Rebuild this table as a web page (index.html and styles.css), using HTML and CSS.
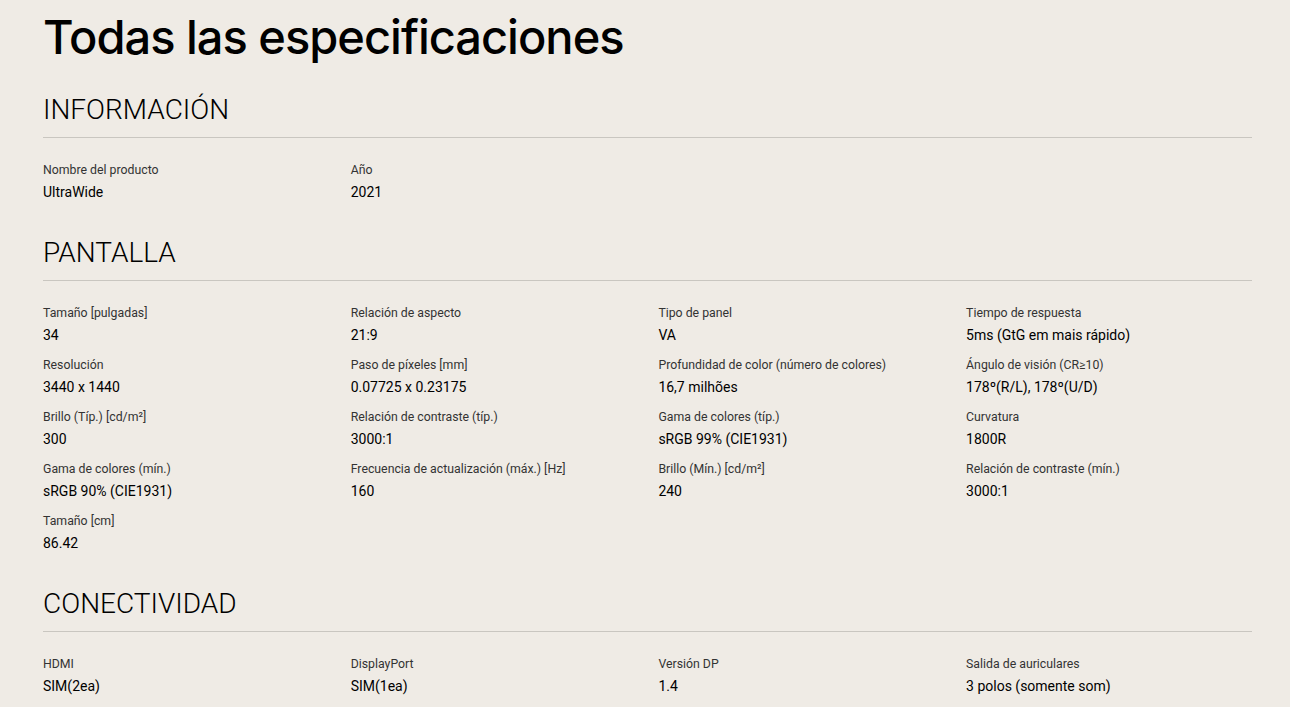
FILE: index.html
```html
<!DOCTYPE html>
<html lang="es">
<head>
  <meta charset="UTF-8" />
  <meta name="viewport" content="width=device-width, initial-scale=1.0"/>
  <title>Todas las especificaciones</title>
  <link rel="stylesheet" href="styles.css">
</head>
<body>

  <main class="specs">
    <h1>Todas las especificaciones</h1>

    <section class="spec-group">
      <h2>INFORMACIÓN</h2>
      <div class="grid">
        <div class="item"><div class="label">Nombre del producto</div><div class="value">UltraWide</div></div>
        <div class="item"><div class="label">Año</div><div class="value">2021</div></div>
      </div>
    </section>

    <section class="spec-group">
      <h2>PANTALLA</h2>
      <div class="grid">
        <div class="item"><div class="label">Tamaño [pulgadas]</div><div class="value">34</div></div>
        <div class="item"><div class="label">Relación de aspecto</div><div class="value">21:9</div></div>
        <div class="item"><div class="label">Tipo de panel</div><div class="value">VA</div></div>
        <div class="item"><div class="label">Tiempo de respuesta</div><div class="value">5ms (GtG em mais rápido)</div></div>
        <div class="item"><div class="label">Resolución</div><div class="value">3440 x 1440</div></div>
        <div class="item"><div class="label">Paso de píxeles [mm]</div><div class="value">0.07725 x 0.23175</div></div>
        <div class="item"><div class="label">Profundidad de color (número de colores)</div><div class="value">16,7 milhões</div></div>
        <div class="item"><div class="label">Ángulo de visión (CR≥10)</div><div class="value">178º(R/L), 178º(U/D)</div></div>
        <div class="item"><div class="label">Brillo (Típ.) [cd/m²]</div><div class="value">300</div></div>
        <div class="item"><div class="label">Relación de contraste (típ.)</div><div class="value">3000:1</div></div>
        <div class="item"><div class="label">Gama de colores (típ.)</div><div class="value">sRGB 99% (CIE1931)</div></div>
        <div class="item"><div class="label">Curvatura</div><div class="value">1800R</div></div>
        <div class="item"><div class="label">Gama de colores (mín.)</div><div class="value">sRGB 90% (CIE1931)</div></div>
        <div class="item"><div class="label">Frecuencia de actualización (máx.) [Hz]</div><div class="value">160</div></div>
        <div class="item"><div class="label">Brillo (Mín.) [cd/m²]</div><div class="value">240</div></div>
        <div class="item"><div class="label">Relación de contraste (mín.)</div><div class="value">3000:1</div></div>
        <div class="item"><div class="label">Tamaño [cm]</div><div class="value">86.42</div></div>
      </div>
    </section>

    <section class="spec-group">
      <h2>CONECTIVIDAD</h2>
      <div class="grid">
        <div class="item"><div class="label">HDMI</div><div class="value">SIM(2ea)</div></div>
        <div class="item"><div class="label">DisplayPort</div><div class="value">SIM(1ea)</div></div>
        <div class="item"><div class="label">Versión DP</div><div class="value">1.4</div></div>
        <div class="item"><div class="label">Salida de auriculares</div><div class="value">3 polos (somente som)</div></div>
      </div>
    </section>
  </main>

</body>
</html>
```

FILE: styles.css
```css
body {
  margin: 0;
  padding: 0;
  background: #efebe5;
  color: #000;
  font-family: Roboto, "Liberation Sans", sans-serif;
}

.specs {
  width: 1209px;
  margin-left: 43px;
}

h1 {
  font-family: Inter, "Liberation Sans", sans-serif;
  font-weight: 500;
  font-size: 47px;
  letter-spacing: -1px;
  line-height: 58px;
  margin: 8px 0 0;
}

.spec-group h2 {
  font-weight: 300;
  font-size: 28px;
  line-height: 36px;
  margin: 0;
  padding: 26px 0 9px;
  border-bottom: 1px solid #c9c6c0;
}

.grid {
  display: grid;
  grid-template-columns: repeat(4, 307.7px);
  padding: 23px 0 6px;
  row-gap: 10px;
}

.label {
  font-size: 12.3px;
  line-height: 18px;
  color: #333;
}

.value {
  font-size: 14px;
  line-height: 22px;
  margin-top: 2px;
}
```
